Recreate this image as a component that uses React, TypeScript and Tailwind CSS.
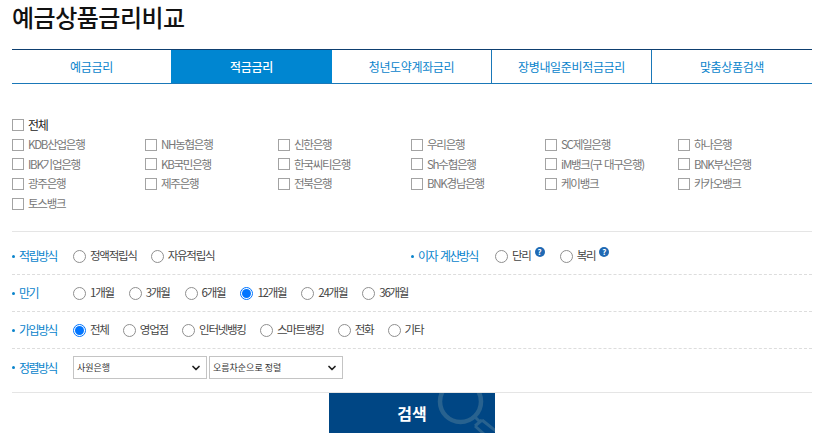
import React from 'react';
import { ChevronDown } from 'lucide-react';

const tabs = ['예금금리', '적금금리', '청년도약계좌금리', '장병내일준비적금금리', '맞춤상품검색'];

const banks = [
  'KDB산업은행', 'NH농협은행', '신한은행', '우리은행', 'SC제일은행', '하나은행',
  'IBK기업은행', 'KB국민은행', '한국씨티은행', 'Sh수협은행', 'iM뱅크(구 대구은행)', 'BNK부산은행',
  '광주은행', '제주은행', '전북은행', 'BNK경남은행', '케이뱅크', '카카오뱅크',
  '토스뱅크',
];

const Check = ({ label, strong }: { label: string; strong?: boolean }) => (
  <label className={`flex h-[19.7px] items-center gap-[4px] text-[11.5px] tracking-[-1.25px] [word-spacing:1px] ${strong ? 'text-[12px] text-[#222]' : 'text-[#777]'}`}>
    <span className="h-[12px] w-[12px] shrink-0 border border-[#a3a3a3] bg-white" />
    <span className="whitespace-nowrap">{label}</span>
  </label>
);

const Radio = ({ label, checked }: { label: string; checked?: boolean }) => (
  <label className="flex items-center gap-[4px] text-[11.5px] tracking-[-1.25px] text-[#444]">
    <span className={`flex h-[13px] w-[13px] shrink-0 items-center justify-center rounded-full border ${checked ? 'border-[#0075ff]' : 'border-[#8f8f8f]'} bg-white`}>
      {checked && <span className="h-[9px] w-[9px] rounded-full bg-[#0075ff]" />}
    </span>
    <span className="whitespace-nowrap">{label}</span>
  </label>
);

const Label = ({ text, className = 'w-[61px]' }: { text: string; className?: string }) => (
  <div className={`flex shrink-0 items-center gap-[4px] text-[12px] tracking-[-1.6px] [word-spacing:2px] text-[#0a84cc] ${className}`}>
    <span className="h-[3px] w-[3px] rounded-full bg-[#0a84cc]" />
    <span className="whitespace-nowrap">{text}</span>
  </div>
);

const Help = () => (
  <span className="mb-[9px] ml-[4px] flex h-[10px] w-[10px] items-center justify-center rounded-full bg-[#1f69b4] text-[8px] font-bold leading-none text-white">?</span>
);

const Select = ({ value }: { value: string }) => (
  <div className="flex h-[23px] w-[134px] items-center justify-between border border-[#c4c4c4] bg-white pl-[3px] pr-[4px] text-[9px] text-[#333]">
    <span>{value}</span>
    <ChevronDown className="h-[12px] w-[12px] text-[#222]" strokeWidth={3.5} />
  </div>
);

export default function App() {
  return (
    <div className="h-[444px] w-[820px] overflow-hidden bg-white pl-[12px] pr-[8px] font-['Noto_Sans_CJK_KR',sans-serif]">
      <h1 className="h-[49px] text-[24px] font-medium leading-[34px] tracking-[-0.5px] text-[#111]">예금상품금리비교</h1>

      <div className="grid h-[35px] grid-cols-[159px_161px_159px_160px_161px] border-b border-t border-b-[#1a78b8] border-t-[#0e3f70] text-[12px] tracking-[-0.35px]">
        {tabs.map((tab, i) => (
          <div
            key={tab}
            className={`flex items-center justify-center ${i === 1 ? 'bg-[#0086d1] font-medium text-white' : 'text-[#0a84cc]'} ${i > 2 ? 'border-l border-[#1a78b8]' : ''}`}
          >
            {tab}
          </div>
        ))}
      </div>

      <div className="h-[147px] pt-[31px]">
        <Check label="전체" strong />
        <div className="grid grid-cols-[133px_133px_133px_134px_133px_134px]">
          {banks.map((bank) => (
            <Check key={bank} label={bank} />
          ))}
        </div>
      </div>

      <div className="flex h-[43px] items-center border-t border-[#e5e5e5] pt-[6px]">
        <div className="flex w-[398px]">
          <Label text="적립방식" />
          <div className="flex gap-[14px]">
            <Radio label="정액적립식" />
            <Radio label="자유적립식" />
          </div>
        </div>
        <Label text="이자 계산방식" className="w-[85px] pl-[1px]" />
        <div className="flex gap-[15px]">
          <div className="flex items-center"><Radio label="단리" /><Help /></div>
          <div className="flex items-center"><Radio label="복리" /><Help /></div>
        </div>
      </div>

      <div className="flex h-[37px] items-center border-t border-dashed border-[#ddd]">
        <Label text="만기" />
        <div className="flex gap-[15px]">
          {['1개월', '3개월', '6개월', '12개월', '24개월', '36개월'].map((m) => (
            <Radio key={m} label={m} checked={m === '12개월'} />
          ))}
        </div>
      </div>

      <div className="flex h-[37px] items-center border-t border-dashed border-[#ddd]">
        <Label text="가입방식" />
        <div className="flex gap-[14.2px]">
          {['전체', '영업점', '인터넷뱅킹', '스마트뱅킹', '전화', '기타'].map((m) => (
            <Radio key={m} label={m} checked={m === '전체'} />
          ))}
        </div>
      </div>

      <div className="flex h-[44px] items-start border-t border-dashed border-[#ddd] pt-[7px]">
        <div className="flex h-[23px] items-center">
          <Label text="정렬방식" />
        </div>
        <div className="flex gap-[2px]">
          <Select value="사원은행" />
          <Select value="오름차순으로 정렬" />
        </div>
      </div>

      <div className="flex justify-center border-t border-[#e5e5e5]">
        <button className="relative h-[40px] w-[166px] overflow-hidden bg-[#004684] text-[16px] font-bold text-white">
          <svg className="absolute left-0 top-0 h-[40px] w-[166px]" viewBox="0 0 166 40" fill="none" stroke="#28628f">
            <circle cx="131.5" cy="8.5" r="20.5" strokeWidth="4.5" />
            <path d="M146 24 L151 29 M153 27 L146 33 M153 27 L168 39 M146 33 L155 41" strokeWidth="3" />
          </svg>
          <span className="relative">검색</span>
        </button>
      </div>
    </div>
  );
}
